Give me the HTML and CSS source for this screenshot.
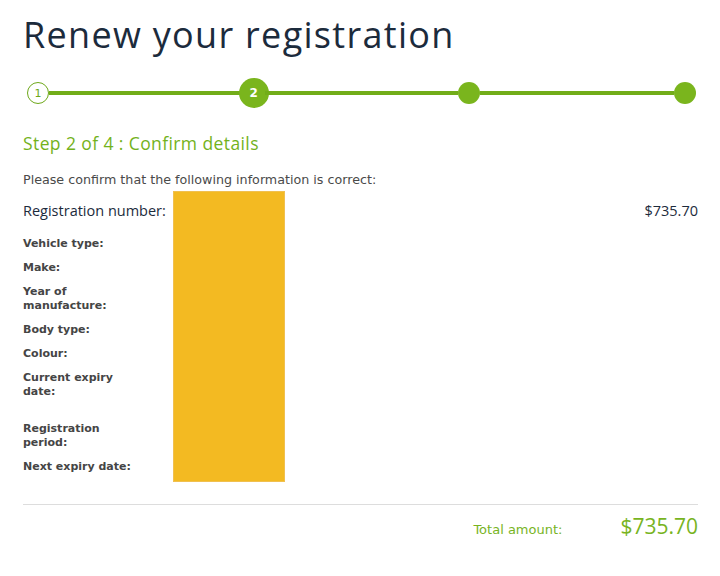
FILE: index.html
```html
<!DOCTYPE html>
<html lang="en">

<head>
  <meta charset="UTF-8">
  <title>Renew your registration</title>
  <link rel="stylesheet" href="styles.css">
</head>

<body>
  <h1 class="page-title">Renew your registration</h1>

  <div class="stepper">
    <span class="step done">1</span>
    <span class="bar"></span>
    <span class="step current">2</span>
    <span class="bar"></span>
    <span class="step"></span>
    <span class="bar"></span>
    <span class="step"></span>
  </div>

  <h2 class="step-title">Step 2 of 4 : Confirm details</h2>

  <p class="intro">Please confirm that the following information is correct:</p>

  <section class="details">
    <div class="fields">
      <div class="reg-label">Registration number:</div>
      <ul class="labels">
        <li>Vehicle type:</li>
        <li>Make:</li>
        <li>Year of manufacture:</li>
        <li>Body type:</li>
        <li>Colour:</li>
        <li class="tall">Current expiry date:</li>
        <li>Registration period:</li>
        <li>Next expiry date:</li>
      </ul>
    </div>
    <div class="redacted"></div>
    <div class="price">$735.70</div>
  </section>

  <div class="total">
    <span class="total-label">Total amount:</span>
    <span class="total-value">$735.70</span>
  </div>
</body>

</html>
```

FILE: styles.css
```css
* {
  box-sizing: border-box;
  margin: 0;
  padding: 0;
}

body {
  background: #fff;
  padding: 0 22px 0 23px;
  font-family: 'DejaVu Sans', Verdana, sans-serif;
  color: #444;
}

.page-title {
  font-family: 'Open Sans', sans-serif;
  font-weight: 400;
  font-size: 36px;
  line-height: 40px;
  color: #1c2b3c;
  margin-top: 15px;
  letter-spacing: 1.3px;
}

/* progress steps */
.stepper {
  display: flex;
  align-items: center;
  margin: 23px 2px 0 4px;
  height: 30px;
}

.step {
  width: 22px;
  height: 22px;
  border-radius: 50%;
  background: #7ab51d;
  flex: none;
  display: flex;
  align-items: center;
  justify-content: center;
  font-size: 11px;
}

.step.done {
  background: #fff;
  border: 1.5px solid #6ea81a;
  color: #6ea81a;
}

.step.current {
  width: 30px;
  height: 30px;
  margin: 0 -4px;
  color: #fff;
  font-weight: bold;
  font-size: 12px;
}

.bar {
  flex: 1;
  height: 4px;
  background: #72ad19;
}

.step-title {
  font-family: 'Open Sans', sans-serif;
  font-weight: 400;
  font-size: 17.5px;
  letter-spacing: 0.4px;
  color: #73b21b;
  margin-top: 23px;
  line-height: 24px;
}

.intro {
  font-size: 12.7px;
  line-height: 18px;
  margin-top: 16px;
  color: #4a4a4a;
}

/* details */
.details {
  display: flex;
  align-items: flex-start;
  margin-top: 2px;
}

.fields {
  width: 150px;
}

.reg-label {
  font-family: 'Open Sans', sans-serif;
  font-size: 14.5px;
  line-height: 40px;
  color: #1c2b3c;
  white-space: nowrap;
}

.labels {
  list-style: none;
  margin-top: 6px;
  width: 112px;
}

.labels li {
  font-weight: bold;
  font-size: 11px;
  line-height: 14px;
  margin-bottom: 10px;
  color: #454545;
}

.labels li.tall {
  min-height: 41px;
}

.redacted {
  width: 112px;
  height: 291px;
  background: #f3ba22;
  border: 1px solid #f0c050;
}

.price {
  margin-left: auto;
  font-family: 'Open Sans', sans-serif;
  font-size: 14.5px;
  line-height: 40px;
  color: #1c2b3c;
}

/* total */
.total {
  border-top: 1px solid #ddd;
  margin-top: 20px;
  display: flex;
  justify-content: flex-end;
  align-items: baseline;
  padding-top: 7px;
}

.total-label {
  font-size: 13px;
  color: #78b41f;
  margin-right: 58px;
}

.total-value {
  font-family: 'Open Sans', sans-serif;
  font-size: 21px;
  color: #78b41f;
}
```
